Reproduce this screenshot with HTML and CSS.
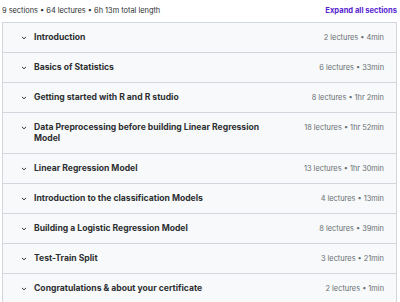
FILE: index.html
```html
<!DOCTYPE html>
<html>
<head>
<meta charset="utf-8">
<link rel="stylesheet" href="styles.css">
</head>
<body>
<div class="page">
  <div class="summary">
    <span class="stats">9 sections • 64 lectures • 6h 13m total length</span>
    <button class="expand">Expand all sections</button>
  </div>
  <div class="sections">
    <div class="row"><span class="chev"><svg viewBox="0 0 10 10" width="8" height="8"><path d="M2.8 4 L5 6 L7.2 4" fill="none" stroke="#2d2f31" stroke-width="1.2" stroke-linecap="round" stroke-linejoin="round"/></svg></span><span class="title">Introduction</span><span class="meta">2 lectures • 4min</span></div>
    <div class="row"><span class="chev"><svg viewBox="0 0 10 10" width="8" height="8"><path d="M2.8 4 L5 6 L7.2 4" fill="none" stroke="#2d2f31" stroke-width="1.2" stroke-linecap="round" stroke-linejoin="round"/></svg></span><span class="title">Basics of Statistics</span><span class="meta">6 lectures • 33min</span></div>
    <div class="row"><span class="chev"><svg viewBox="0 0 10 10" width="8" height="8"><path d="M2.8 4 L5 6 L7.2 4" fill="none" stroke="#2d2f31" stroke-width="1.2" stroke-linecap="round" stroke-linejoin="round"/></svg></span><span class="title">Getting started with R and R studio</span><span class="meta">8 lectures • 1hr 2min</span></div>
    <div class="row"><span class="chev"><svg viewBox="0 0 10 10" width="8" height="8"><path d="M2.8 4 L5 6 L7.2 4" fill="none" stroke="#2d2f31" stroke-width="1.2" stroke-linecap="round" stroke-linejoin="round"/></svg></span><span class="title">Data Preprocessing before building Linear Regression Model</span><span class="meta">18 lectures • 1hr 52min</span></div>
    <div class="row"><span class="chev"><svg viewBox="0 0 10 10" width="8" height="8"><path d="M2.8 4 L5 6 L7.2 4" fill="none" stroke="#2d2f31" stroke-width="1.2" stroke-linecap="round" stroke-linejoin="round"/></svg></span><span class="title">Linear Regression Model</span><span class="meta">13 lectures • 1hr 30min</span></div>
    <div class="row"><span class="chev"><svg viewBox="0 0 10 10" width="8" height="8"><path d="M2.8 4 L5 6 L7.2 4" fill="none" stroke="#2d2f31" stroke-width="1.2" stroke-linecap="round" stroke-linejoin="round"/></svg></span><span class="title">Introduction to the classification Models</span><span class="meta">4 lectures • 13min</span></div>
    <div class="row"><span class="chev"><svg viewBox="0 0 10 10" width="8" height="8"><path d="M2.8 4 L5 6 L7.2 4" fill="none" stroke="#2d2f31" stroke-width="1.2" stroke-linecap="round" stroke-linejoin="round"/></svg></span><span class="title">Building a Logistic Regression Model</span><span class="meta">8 lectures • 39min</span></div>
    <div class="row"><span class="chev"><svg viewBox="0 0 10 10" width="8" height="8"><path d="M2.8 4 L5 6 L7.2 4" fill="none" stroke="#2d2f31" stroke-width="1.2" stroke-linecap="round" stroke-linejoin="round"/></svg></span><span class="title">Test-Train Split</span><span class="meta">3 lectures • 21min</span></div>
    <div class="row"><span class="chev"><svg viewBox="0 0 10 10" width="8" height="8"><path d="M2.8 4 L5 6 L7.2 4" fill="none" stroke="#2d2f31" stroke-width="1.2" stroke-linecap="round" stroke-linejoin="round"/></svg></span><span class="title">Congratulations &amp; about your certificate</span><span class="meta">2 lectures • 1min</span></div>
  </div>
</div>
</body>
</html>
```

FILE: styles.css
```css
* { box-sizing: border-box; }
html, body { margin: 0; padding: 0; background: #fff; }
body { font-family: Inter, "Noto Sans", sans-serif; color: #2d2f31; }
.page { padding: 0 3px 0 2px; }
.summary {
  height: 22px;
  display: flex;
  align-items: center;
  justify-content: space-between;
  padding-bottom: 1px;
}
.stats { font-size: 7.4px; color: #2d2f31; }
.expand {
  border: 0; background: none; padding: 0; margin: 0;
  font-family: inherit; font-size: 7.6px; font-weight: 700; color: #5624d0;
}
.sections { border: 1px solid #d1d7dc; border-bottom: 0; }
.row {
  display: flex;
  align-items: flex-start;
  background: #f7f9fa;
  border-bottom: 1px solid #d1d7dc;
  padding: 9px 12px 9px 17px;
  min-height: 30px;
}
.chev { width: 14px; height: 11px; display: flex; align-items: center; flex-shrink: 0; }
.chev svg { display: block; }
.title { flex: 1; font-size: 8.6px; font-weight: 700; line-height: 11px; padding-right: 30px; }
.meta { font-size: 7.4px; line-height: 11px; color: #6a6f73; white-space: nowrap; }
```
